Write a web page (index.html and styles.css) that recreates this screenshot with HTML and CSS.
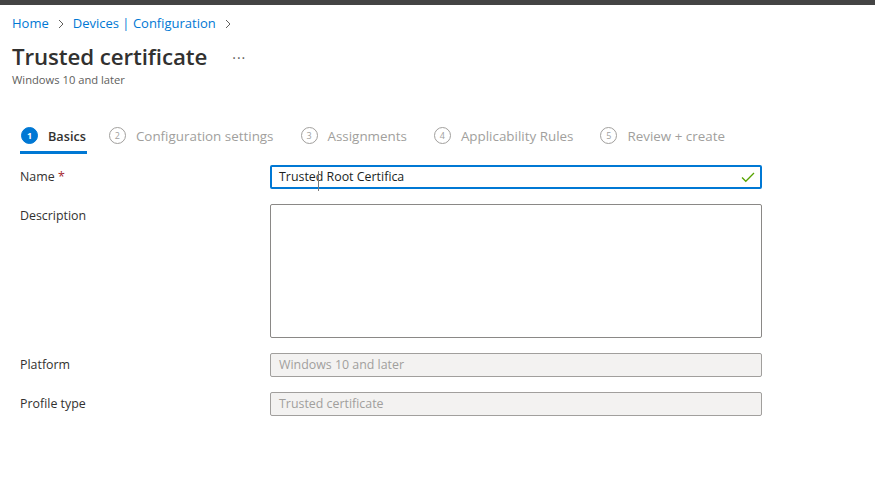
FILE: index.html
```html
<!DOCTYPE html>
<html>
<head>
<meta charset="utf-8">
<link rel="stylesheet" href="styles.css">
</head>
<body>
<div class="topbar"></div>
<div class="page">
  <nav class="crumbs">
    <a class="crumb">Home</a>
    <svg class="chev" width="8" height="10" viewBox="0 0 8 10"><path d="M2 1 L6 5 L2 9" fill="none" stroke="#605e5c" stroke-width="1"/></svg>
    <a class="crumb">Devices | Configuration</a>
    <svg class="chev" width="8" height="10" viewBox="0 0 8 10"><path d="M2 1 L6 5 L2 9" fill="none" stroke="#605e5c" stroke-width="1"/></svg>
  </nav>
  <div class="titlerow">
    <h1 class="title">Trusted certificate</h1>
    <span class="more">···</span>
  </div>
  <div class="subtitle">Windows 10 and later</div>

  <div class="tabs">
    <div class="tab active"><span class="num">1</span><span class="tlabel">Basics</span></div>
    <div class="tab"><span class="num">2</span><span class="tlabel">Configuration settings</span></div>
    <div class="tab"><span class="num">3</span><span class="tlabel">Assignments</span></div>
    <div class="tab"><span class="num">4</span><span class="tlabel">Applicability Rules</span></div>
    <div class="tab"><span class="num">5</span><span class="tlabel">Review + create</span></div>
  </div>

  <div class="form">
    <div class="label">Name <span class="req">*</span></div>
    <div class="field focused">
      <span class="val">Trusted Root Certifica</span>
      <svg class="check" width="14" height="12" viewBox="0 0 14 12"><path d="M1 6.5 L4.8 10.3 L13 2" fill="none" stroke="#57a300" stroke-width="1.3"/></svg>
      <span class="ibeam"></span>
    </div>
    <div class="label">Description</div>
    <div class="area"></div>
    <div class="label">Platform</div>
    <div class="field disabled"><span class="val">Windows 10 and later</span></div>
    <div class="label">Profile type</div>
    <div class="field disabled"><span class="val">Trusted certificate</span></div>
  </div>
</div>
</body>
</html>
```
FILE: styles.css
```css
html, body {
  margin: 0;
  padding: 0;
  background: #ffffff;
  font-family: "Open Sans", "Noto Sans", sans-serif;
  color: #323130;
}
.topbar {
  height: 5px;
  background: #444444;
}
.page {
  padding: 0 12px;
}
.crumbs {
  display: flex;
  align-items: center;
  height: 20px;
  margin-top: 8px;
  font-size: 13px;
}
.crumb {
  color: #0078d4;
  line-height: 20px;
}
.chev {
  margin: 1px 8px 0 8px;
}
.titlerow {
  display: flex;
  align-items: center;
  margin-top: 9px;
  height: 30px;
}
.title {
  margin: 0;
  font-size: 22.3px;
  font-weight: 600;
  color: #323130;
  line-height: 30px;
  letter-spacing: -0.1px;
}
.more {
  margin-left: 25px;
  color: #605e5c;
  font-size: 14px;
  letter-spacing: 1px;
}
.subtitle {
  font-size: 11.2px;
  line-height: 16px;
  color: #605e5c;
}
.tabs {
  display: flex;
  margin-top: 32px;
  padding-left: 8px;
  height: 37px;
  align-items: flex-start;
}
.tab {
  display: flex;
  align-items: center;
  height: 34px;
  padding: 0 1px;
  margin-right: 25px;
  border-bottom: 3px solid transparent;
  box-sizing: border-box;
  color: #a19f9d;
  font-size: 13.4px;
}
.tab.active {
  border-bottom-color: #0078d4;
  color: #323130;
  font-weight: 600;
  font-size: 12.7px;
  margin-right: 21px;
}
.num {
  width: 15px;
  height: 15px;
  border-radius: 50%;
  border: 1px solid #a19f9d;
  font-size: 9px;
  font-weight: 400;
  display: flex;
  align-items: center;
  justify-content: center;
  margin-right: 10px;
  color: #a19f9d;
  line-height: 1;
}
.tab.active .num {
  background: #0078d4;
  border-color: #0078d4;
  color: #ffffff;
  font-weight: 700;
}
.tlabel {
  line-height: 20px;
}
.form {
  display: grid;
  grid-template-columns: 250px 492px;
  row-gap: 15px;
  margin-top: 8px;
  padding-left: 8px;
}
.label {
  font-size: 12.4px;
  line-height: 24px;
  color: #323130;
}
.req {
  color: #a4262c;
}
.field {
  position: relative;
  height: 24px;
  box-sizing: border-box;
  border: 1px solid #8a8886;
  display: flex;
  align-items: center;
  padding-left: 8px;
  font-size: 12.4px;
  border-radius: 2px;
}
.field.focused {
  border: 2px solid #0078d4;
  padding-left: 7px;
  color: #201f1e;
}
.field.disabled {
  background: #f3f2f1;
  border-color: #a19f9d;
  color: #a19f9d;
}
.val {
  flex: 1;
  line-height: 20px;
}
.check {
  margin-right: 5px;
}
.ibeam {
  position: absolute;
  left: 46px;
  top: 4px;
  width: 1px;
  height: 20px;
  background: #7a7a7a;
}
.area {
  height: 134px;
  box-sizing: border-box;
  border: 1px solid #8a8886;
  border-radius: 2px;
}
```
